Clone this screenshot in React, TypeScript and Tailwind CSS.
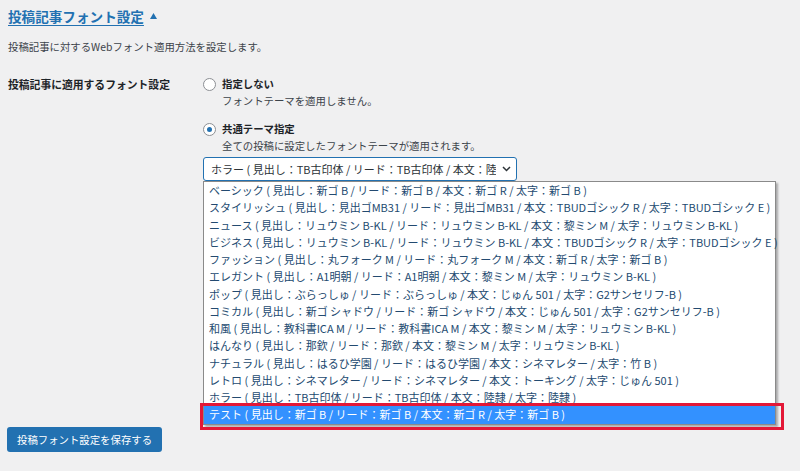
import type { JSX } from 'react';

const themes: string[] = [
  'ベーシック ( 見出し：新ゴ B / リード：新ゴ B / 本文：新ゴ R / 太字：新ゴ B )',
  'スタイリッシュ ( 見出し：見出ゴMB31 / リード：見出ゴMB31 / 本文：TBUDゴシック R / 太字：TBUDゴシック E )',
  'ニュース ( 見出し：リュウミン B-KL / リード：リュウミン B-KL / 本文：黎ミン M / 太字：リュウミン B-KL )',
  'ビジネス ( 見出し：リュウミン B-KL / リード：リュウミン B-KL / 本文：TBUDゴシック R / 太字：TBUDゴシック E )',
  'ファッション ( 見出し：丸フォーク M / リード：丸フォーク M / 本文：新ゴ R / 太字：新ゴ B )',
  'エレガント ( 見出し：A1明朝 / リード：A1明朝 / 本文：黎ミン M / 太字：リュウミン B-KL )',
  'ポップ ( 見出し：ぶらっしゅ / リード：ぶらっしゅ / 本文：じゅん 501 / 太字：G2サンセリフ-B )',
  'コミカル ( 見出し：新ゴ シャドウ / リード：新ゴ シャドウ / 本文：じゅん 501 / 太字：G2サンセリフ-B )',
  '和風 ( 見出し：教科書ICA M / リード：教科書ICA M / 本文：黎ミン M / 太字：リュウミン B-KL )',
  'はんなり ( 見出し：那欽 / リード：那欽 / 本文：黎ミン M / 太字：リュウミン B-KL )',
  'ナチュラル ( 見出し：はるひ学園 / リード：はるひ学園 / 本文：シネマレター / 太字：竹 B )',
  'レトロ ( 見出し：シネマレター / リード：シネマレター / 本文：トーキング / 太字：じゅん 501 )',
  'ホラー ( 見出し：TB古印体 / リード：TB古印体 / 本文：陸隷 / 太字：陸隷 )',
  'テスト ( 見出し：新ゴ B / リード：新ゴ B / 本文：新ゴ R / 太字：新ゴ B )',
];

function Radio({ checked }: { checked: boolean }): JSX.Element {
  return (
    <span className="flex h-[13px] w-[13px] shrink-0 items-center justify-center rounded-full border border-[#8c8f94] bg-white">
      {checked && <span className="h-[5px] w-[5px] rounded-full bg-[#2271b1]" />}
    </span>
  );
}

export default function App(): JSX.Element {
  return (
    <div
      className="min-h-[471px] w-[800px] overflow-hidden bg-[#f0f0f1] px-2 text-[10.4px] text-[#3c434a]"
      style={{ fontFamily: '"Noto Sans CJK JP", "Noto Sans", sans-serif' }}
    >
      <h2 className="flex items-center pt-[6px] text-[13.6px] font-bold leading-[20px]">
        <span className="text-[#2271b1] underline decoration-1 underline-offset-[3px]">投稿記事フォント設定</span>
        <svg className="ml-[6px]" width="7" height="6" viewBox="0 0 7 6">
          <polygon points="3.5,0 7,6 0,6" fill="#2271b1" />
        </svg>
      </h2>

      <p className="mt-[13px] leading-[16px]">投稿記事に対するWebフォント適用方法を設定します。</p>

      <div className="mt-[21px] flex">
        <div className="w-[195px] text-[10.8px] font-bold leading-[16px] text-[#1d2327]">投稿記事に適用するフォント設定</div>

        <div className="flex-1">
          <div className="flex items-center gap-[6px] leading-[16px]">
            <Radio checked={false} />
            <span className="font-bold text-[#1d2327]">指定しない</span>
          </div>
          <p className="ml-[19px] leading-[17px]">フォントテーマを適用しません。</p>

          <div className="mt-[12px] flex items-center gap-[6px] leading-[16px]">
            <Radio checked />
            <span className="font-bold text-[#1d2327]">共通テーマ指定</span>
          </div>
          <p className="ml-[19px] leading-[17px]">全ての投稿に設定したフォントテーマが適用されます。</p>

          <div className="relative mt-[3px] w-[314px] text-[11px]">
            <div className="flex h-[24px] items-center overflow-hidden rounded-[3px] border border-[#2271b1] bg-white pl-[7px] pr-[20px] text-[#2c3338]">
              <span className="overflow-hidden whitespace-nowrap">{themes[12]}</span>
              <svg className="absolute right-[6px] top-[9px]" width="9" height="6" viewBox="0 0 9 6">
                <polyline points="1,1 4.5,4.5 8,1" fill="none" stroke="#2c3338" strokeWidth="1.5" />
              </svg>
            </div>

            <div className="absolute left-0 top-full w-[573px] border border-[#8a8a8a] bg-white shadow-[2px_2px_2px_rgba(0,0,0,0.3)]">
              {themes.map((t, i) => (
                <div
                  key={t}
                  className={`h-[17.25px] whitespace-nowrap pl-[5px] leading-[17.25px] ${
                    i === themes.length - 1 ? 'bg-[#3391ff] text-white' : 'text-[#234a70]'
                  }`}
                >
                  {t}
                </div>
              ))}
              <div className="pointer-events-none absolute bottom-[-6px] left-[-4px] right-[-9px] h-[27px] border-[3px] border-[#e31837]" />
            </div>
          </div>
        </div>
      </div>

      <button className="ml-[-1px] mt-[246px] h-[25px] rounded-[3px] bg-[#2271b1] px-[10px] text-[10.4px] leading-[25px] text-white">
        投稿フォント設定を保存する
      </button>
    </div>
  );
}
